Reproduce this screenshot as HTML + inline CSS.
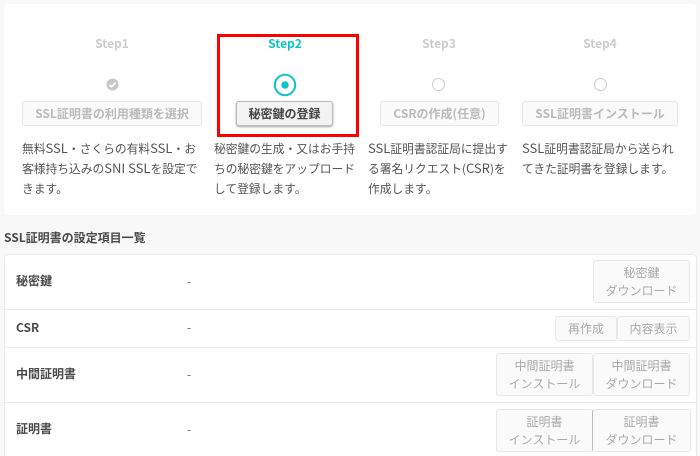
<!DOCTYPE html>
<html lang="ja">
<head>
<meta charset="utf-8">
<style>
html,body{margin:0;padding:0;width:700px;height:456px;overflow:hidden;background:#f8f8f8}
body{position:relative;font-family:"Noto Sans CJK JP","Liberation Sans",sans-serif;color:#555;font-size:12px}
.a{position:absolute;box-sizing:border-box}
.card{left:4px;top:4px;width:692px;height:211px;background:#fff;border-radius:3px}
.step{top:36px;width:120px;margin-left:-60px;text-align:center;font-weight:700;font-size:12px;line-height:16px;color:#ccc}
.btn{top:101px;height:25px;border:1px solid #e8e8e8;border-radius:3px;background:#fafafa;color:#bbb;font-weight:700;font-size:12px;line-height:23px;text-align:center;white-space:nowrap}
.desc{top:139px;line-height:20px;font-size:11.75px;color:#555;white-space:nowrap}
.desc span{font-size:13px;line-height:1}
.radio{top:78px;width:13px;height:13px;border:1px solid #ccc;border-radius:50%;background:#fff}
.red{left:217px;top:34px;width:142px;height:103px;border:3px solid #f00}
.title{left:4px;top:230px;font-weight:700;font-size:12px;line-height:16px;color:#4a4a4a;white-space:nowrap}
.table{left:4px;top:254px;width:693px;height:210px;background:#fff;border:1px solid #eaeaea;border-radius:4px}
.line{left:4px;width:693px;height:1px;background:#eaeaea}
.th{left:16px;font-weight:700;font-size:12px;line-height:16px;color:#4a4a4a;white-space:nowrap}
.dash{left:187px;font-size:12px;line-height:16px;color:#666}
.b{border:1px solid #e8e8e8;border-radius:3px;background:#fafafa;color:#aaa;font-size:12px;line-height:18px;text-align:center;white-space:nowrap;padding-top:3px}
</style>
</head>
<body>
<div class="a card"></div>

<div class="a step" style="left:112px">Step1</div>
<div class="a step" style="left:285px;color:#0cc4c4">Step2</div>
<div class="a step" style="left:439px">Step3</div>
<div class="a step" style="left:600px">Step4</div>

<svg class="a" style="left:106px;top:78px" width="13" height="13" viewBox="0 0 13 13"><circle cx="6.5" cy="6.5" r="6" fill="#c8c8c8"/><path d="M3.6 6.8L5.6 8.8L9.6 4.6" fill="none" stroke="#fff" stroke-width="1.6"/></svg>
<svg class="a" style="left:273px;top:73px" width="24" height="24" viewBox="0 0 24 24"><circle cx="12" cy="12" r="10.2" fill="none" stroke="#0cc4c4" stroke-width="2"/><circle cx="12" cy="12" r="3.7" fill="#0cc4c4"/></svg>
<div class="a radio" style="left:432px"></div>
<div class="a radio" style="left:594px"></div>

<div class="a btn" style="left:22px;width:180px">SSL証明書の利用種類を選択</div>
<div class="a btn" style="left:236px;width:97px;border-color:#bbb;background:#f3f3f3;color:#444;box-shadow:0 1px 2px rgba(0,0,0,.35)">秘密鍵の登録</div>
<div class="a btn" style="left:380px;width:119px">CSRの作成(任意)</div>
<div class="a btn" style="left:522px;width:156px">SSL証明書インストール</div>

<div class="a desc" style="left:22px">無料<span>SSL</span>・さくらの有料<span>SSL</span>・お<br>客様持ち込みの<span>SNI SSL</span>を設定で<br>きます。</div>
<div class="a desc" style="left:214px">秘密鍵の生成・又はお手持<br>ちの秘密鍵をアップロード<br>して登録します。</div>
<div class="a desc" style="left:368px"><span>SSL</span>証明書認証局に提出す<br>る署名リクエスト(<span>CSR</span>)を<br>作成します。</div>
<div class="a desc" style="left:522px"><span>SSL</span>証明書認証局から送られ<br>てきた証明書を登録します。</div>

<div class="a red"></div>

<div class="a title">SSL証明書の設定項目一覧</div>
<div class="a table"></div>
<div class="a line" style="top:309px"></div>
<div class="a line" style="top:347px"></div>
<div class="a line" style="top:402px"></div>

<div class="a th" style="top:273px">秘密鍵</div>
<div class="a th" style="top:320px">CSR</div>
<div class="a th" style="top:366px">中間証明書</div>
<div class="a th" style="top:421px">証明書</div>
<div class="a dash" style="top:274px">-</div>
<div class="a dash" style="top:320px">-</div>
<div class="a dash" style="top:367px">-</div>
<div class="a dash" style="top:422px">-</div>

<div class="a b" style="left:593px;top:260px;width:97px;height:43px">秘密鍵<br>ダウンロード</div>
<div class="a b" style="left:555px;top:316px;width:62px;height:25px">再作成</div>
<div class="a b" style="left:617px;top:316px;width:73px;height:25px">内容表示</div>
<div class="a b" style="left:496px;top:353px;width:97px;height:43px">中間証明書<br>インストール</div>
<div class="a b" style="left:593px;top:353px;width:97px;height:43px">中間証明書<br>ダウンロード</div>
<div class="a b" style="left:496px;top:409px;width:97px;height:43px">証明書<br>インストール</div>
<div class="a b" style="left:592px;top:409px;width:99px;height:43px;border-left-color:#bbb">証明書<br>ダウンロード</div>
</body>
</html>
